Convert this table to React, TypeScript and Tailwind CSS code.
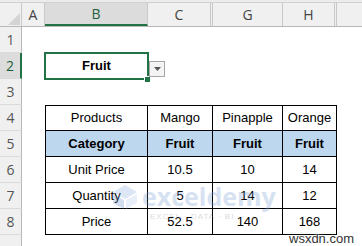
import React from "react";

const COLS = [
  { key: "A", w: "w-[23px]" },
  { key: "B", w: "w-[103px]" },
  { key: "C", w: "w-[65px]" },
  { key: "G", w: "w-[70px]" },
  { key: "H", w: "w-[54px]" },
];

type Row = { n: number; label?: string; cells?: string[]; kind?: "head" | "cat" | "data" };

const rows: Row[] = [
  { n: 1, label: "1" },
  { n: 2, label: "2" },
  { n: 3, label: "3" },
  { n: 4, label: "4", cells: ["Products", "Mango", "Pinapple", "Orange"], kind: "head" },
  { n: 5, label: "5", cells: ["Category", "Fruit", "Fruit", "Fruit"], kind: "cat" },
  { n: 6, label: "6", cells: ["Unit Price", "10.5", "10", "14"], kind: "data" },
  { n: 7, label: "7", cells: ["Quantity", "5", "14", "12"], kind: "data" },
  { n: 8, label: "8", cells: ["Price", "52.5", "140", "168"], kind: "data" },
  { n: 9, label: "" },
];

const tableW = ["w-[103px]", "w-[65px]", "w-[70px]", "w-[54px]"];

export default function App() {
  return (
    <div className="relative w-[362px] h-[246px] overflow-hidden bg-white font-['Liberation_Sans',Arial,sans-serif] text-black">
      {/* top strip */}
      <div className="h-[3px] bg-[#ececec] border-b border-[#d0d0d0]" />
      {/* column header */}
      <div className="flex h-[24px] bg-[#f0f0f0] border-b border-[#b8b8b8] text-[14px] text-[#444] font-['Open_Sans',sans-serif]">
        <div className="relative w-[22px] border-r border-[#c8c8c8]">
          <svg className="absolute left-[8px] top-[10px]" width="12" height="12" viewBox="0 0 12 12">
            <polygon points="12,0 12,12 0,12" fill="#d4d4d4" />
          </svg>
        </div>
        {COLS.map((c) => (
          <div
            key={c.key}
            className={`${c.w} flex items-center justify-center ${
              c.key === "B"
                ? "bg-[#dcdcdc] border-b-2 border-[#217346] text-[#1e5e3a] border-r border-r-[#c8c8c8]"
                : c.key === "C" || c.key === "H"
                ? "border-r-[3px] border-double border-[#c8c8c8]"
                : "border-r border-[#c8c8c8]"
            }`}
          >
            {c.key}
          </div>
        ))}
        <div className="flex-1" />
      </div>
      {/* body */}
      {rows.map((r) => (
        <div key={r.n} className="flex h-[26px] text-[13px]">
          <div
            className={`w-[22px] shrink-0 flex items-center justify-center text-[14px] font-['Open_Sans',sans-serif] border-b border-[#dadada] ${
              r.n === 2
                ? "bg-[#dcdcdc] text-[#1e5e3a] border-r-2 border-r-[#217346]"
                : "bg-[#f0f0f0] text-[#555] border-r border-r-[#b8b8b8]"
            }`}
          >
            {r.label}
          </div>
          <div className="w-[23px] shrink-0" />
          {r.n === 2 ? (
            <div className="relative w-[103px] shrink-0 flex items-center justify-center font-bold">
              <div className="absolute -left-[1px] -top-[1px] w-[105px] h-[28px] border-2 border-[#217346]" />
              <div className="absolute left-[99px] top-[23px] w-[5px] h-[5px] bg-[#217346] border border-white box-content" />
              <span className="relative">Fruit</span>
              <div className="absolute left-[104px] top-[8px] w-[16px] h-[16px] border border-[#a6a6a6] bg-[#f4f4f4] flex items-center justify-center">
                <svg width="7" height="4" viewBox="0 0 7 4">
                  <polygon points="0,0 7,0 3.5,4" fill="#555" />
                </svg>
              </div>
            </div>
          ) : r.cells ? (
            r.cells.map((t, i) => (
              <div
                key={i}
                className={`${tableW[i]} shrink-0 flex items-center justify-center border-r border-b border-black ${
                  i === 0 ? "border-l" : ""
                } ${r.kind === "head" ? "border-t" : ""} ${
                  r.kind === "cat" ? "bg-[#bdd7ee] font-bold" : ""
                }`}
              >
                {t}
              </div>
            ))
          ) : null}
        </div>
      ))}
      {/* watermark */}
      <div className="absolute left-[112px] top-[184px] flex items-start gap-[4px] opacity-30 pointer-events-none">
        <svg width="26" height="26" viewBox="0 0 26 26">
          <polygon points="13,1 25,8 13,15 1,8" fill="#8fb0e0" />
          <polygon points="1,10 12,16 12,25 1,19" fill="#6f95cf" />
          <polygon points="14,16 25,10 25,19 14,25" fill="#b7cbee" />
        </svg>
        <div className="flex flex-col items-start">
          <span className="text-[25px] leading-[24px] font-bold text-[#7b9fd6] font-['Open_Sans',sans-serif]">exceldemy</span>
          <span className="text-[8px] tracking-[1px] text-[#888] ml-[8px] mt-[3px]">EXCEL · DATA · BI</span>
        </div>
      </div>
      <div className="absolute left-[289px] top-[229px] text-[13px] text-[#333] [text-shadow:0_0_2px_#fff,0_0_2px_#fff]">
        wsxdn.com
      </div>
    </div>
  );
}
